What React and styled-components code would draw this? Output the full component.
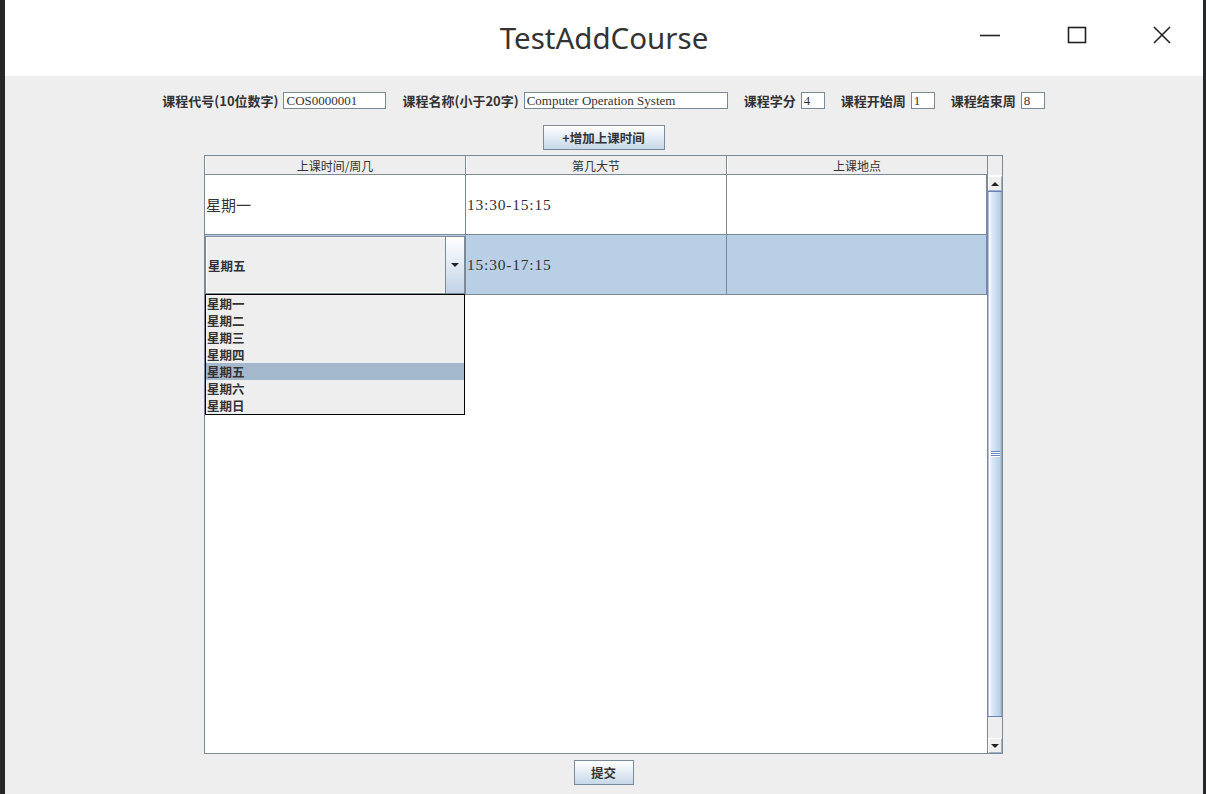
import React from "react";
import styled, { createGlobalStyle } from "styled-components";

const GlobalStyle = createGlobalStyle`
  html, body {
    margin: 0;
    padding: 0;
    background: #262729;
  }
  * {
    box-sizing: border-box;
  }
`;

const fields = [
  { label: "课程代号(10位数字)", value: "COS0000001", width: 103 },
  { label: "课程名称(小于20字)", value: "Computer Operation System", width: 204 },
  { label: "课程学分", value: "4", width: 24 },
  { label: "课程开始周", value: "1", width: 24 },
  { label: "课程结束周", value: "8", width: 24 },
];

const columns = ["上课时间/周几", "第几大节", "上课地点"];
const days = ["星期一", "星期二", "星期三", "星期四", "星期五", "星期六", "星期日"];

function App() {
  return (
    <>
      <GlobalStyle />
      <Window>
        <TitleBar>
          <span />
          <Title>TestAddCourse</Title>
          <Controls>
            <ControlButton>
              <svg width="22" height="22" viewBox="0 0 22 22">
                <path d="M1 11.5h20" stroke="#222" strokeWidth="1.6" />
              </svg>
            </ControlButton>
            <ControlButton>
              <svg width="22" height="22" viewBox="0 0 22 22">
                <rect x="2.5" y="3.5" width="17" height="15" fill="none" stroke="#222" strokeWidth="1.6" />
              </svg>
            </ControlButton>
            <ControlButton>
              <svg width="22" height="22" viewBox="0 0 22 22">
                <path d="M3 3l16 16M19 3L3 19" stroke="#222" strokeWidth="1.6" />
              </svg>
            </ControlButton>
          </Controls>
        </TitleBar>

        <Content>
          <FormRow>
            {fields.map((f) => (
              <Field key={f.label}>
                <Label>{f.label}</Label>
                <TextInput $width={f.width} defaultValue={f.value} />
              </Field>
            ))}
          </FormRow>

          <MetalButton $width={122} $gap={16}>+增加上课时间</MetalButton>

          <TableFrame>
            <TableMain>
              <HeaderRow>
                {columns.map((c) => (
                  <HeaderCell key={c}>{c}</HeaderCell>
                ))}
              </HeaderRow>
              <Body>
                <Row>
                  <Cell>
                    <CjkText>星期一</CjkText>
                  </Cell>
                  <Cell>
                    <TimeText>13:30-15:15</TimeText>
                  </Cell>
                  <Cell />
                </Row>
                <Row $selected>
                  <ComboCell>
                    <Combo>
                      <ComboValue>星期五</ComboValue>
                      <ComboArrow>
                        <Triangle $down />
                      </ComboArrow>
                    </Combo>
                    <Popup>
                      {days.map((d) => (
                        <PopupItem key={d} $active={d === "星期五"}>
                          {d}
                        </PopupItem>
                      ))}
                    </Popup>
                  </ComboCell>
                  <Cell>
                    <TimeText>15:30-17:15</TimeText>
                  </Cell>
                  <Cell />
                </Row>
              </Body>
            </TableMain>

            <ScrollColumn>
              <ScrollCorner />
              <ScrollBar>
                <ScrollArrow>
                  <Triangle />
                </ScrollArrow>
                <Thumb>
                  <Grip />
                </Thumb>
                <Track />
                <ScrollArrow>
                  <Triangle $down />
                </ScrollArrow>
              </ScrollBar>
            </ScrollColumn>
          </TableFrame>

          <MetalButton $width={60} $gap={6}>提交</MetalButton>
        </Content>
      </Window>
    </>
  );
}

export default App;

const Window = styled.div`
  margin: 0 3px 0 5px;
  height: 794px;
  display: flex;
  flex-direction: column;
  background: #eeeeee;
  overflow: hidden;
`;

const TitleBar = styled.div`
  height: 76px;
  background: #ffffff;
  display: grid;
  grid-template-columns: 1fr auto 1fr;
  align-items: center;
`;

const Title = styled.div`
  font-family: "Noto Sans", "Open Sans", sans-serif;
  font-size: 29.5px;
  color: #333333;
  padding-bottom: 2px;
`;

const Controls = styled.div`
  display: flex;
  justify-content: flex-end;
  gap: 2px;
`;

const ControlButton = styled.div`
  width: 85px;
  height: 76px;
  display: flex;
  align-items: center;
  justify-content: center;
  padding-bottom: 6px;
  &:last-child {
    width: 82px;
  }
`;

const Content = styled.div`
  flex: 1;
  display: flex;
  flex-direction: column;
  align-items: center;
  padding-top: 16px;
  padding-right: 1px;
`;

const FormRow = styled.div`
  display: flex;
  align-items: center;
  gap: 16px;
  height: 17px;
`;

const Field = styled.div`
  display: flex;
  align-items: center;
  gap: 5px;
`;

const Label = styled.span`
  font-family: "Noto Sans CJK SC", "DejaVu Sans", sans-serif;
  font-weight: 700;
  font-size: 13px;
  color: #333333;
  white-space: nowrap;
`;

const TextInput = styled.input`
  width: ${(p) => p.$width}px;
  height: 17px;
  border: 1px solid #7a8a99;
  background: #ffffff;
  padding: 0 2px;
  font-family: "Liberation Serif", "Noto Sans CJK SC", serif;
  font-size: 13px;
  color: #333333;
  outline: none;
`;

const MetalButton = styled.div`
  width: ${(p) => p.$width}px;
  height: 25px;
  margin-top: ${(p) => p.$gap}px;
  border: 1px solid #7a8a99;
  background: linear-gradient(180deg, #ffffff 0%, #e6eef6 45%, #c6d7e8 100%);
  display: flex;
  align-items: center;
  justify-content: center;
  font-family: "Noto Sans CJK SC", "DejaVu Sans", sans-serif;
  font-weight: 700;
  font-size: 12.5px;
  color: #333333;
`;

const TableFrame = styled.div`
  margin-top: 5px;
  width: 799px;
  height: 599px;
  border: 1px solid #7a8a99;
  display: flex;
  background: #ffffff;
`;

const TableMain = styled.div`
  flex: 1;
  display: flex;
  flex-direction: column;
`;

const HeaderRow = styled.div`
  height: 19px;
  display: grid;
  grid-template-columns: 261px 261px 260px;
  background: #eeeeee;
  border-bottom: 1px solid #7a8a99;
`;

const HeaderCell = styled.div`
  display: flex;
  align-items: center;
  justify-content: center;
  font-family: "Noto Sans CJK SC", "DejaVu Sans", sans-serif;
  font-size: 12px;
  color: #333333;
  border-right: 1px solid #7a8a99;
  box-shadow: inset 1px 0 0 #ffffff;
  &:last-child {
    border-right: none;
  }
`;

const Body = styled.div`
  flex: 1;
  background: #ffffff;
  position: relative;
`;

const Row = styled.div`
  height: 60px;
  display: grid;
  grid-template-columns: 261px 261px 260px;
  background: ${(p) => (p.$selected ? "#b8cfe5" : "#ffffff")};
  border-bottom: 1px solid #7a8a99;
`;

const Cell = styled.div`
  display: flex;
  align-items: center;
  padding-left: 1px;
  border-right: 1px solid #7a8a99;
`;

const ComboCell = styled(Cell)`
  position: relative;
  padding: 1px 0 0 0;
  align-items: stretch;
`;

const CjkText = styled.span`
  font-family: "Noto Sans CJK SC", "DejaVu Sans", sans-serif;
  font-size: 15px;
  color: #333333;
`;

const TimeText = styled.span`
  font-family: "Liberation Serif", serif;
  font-size: 15.5px;
  letter-spacing: 0.8px;
  color: #333333;
`;

const Combo = styled.div`
  flex: 1;
  display: flex;
  border: 1px solid #7a8a99;
  background: #eeeeee;
`;

const ComboValue = styled.div`
  flex: 1;
  display: flex;
  align-items: center;
  padding-left: 1px;
  font-family: "Noto Sans CJK SC", "DejaVu Sans", sans-serif;
  font-weight: 700;
  font-size: 12.5px;
  color: #333333;
  border: 1px solid #ffffff;
  border-right: none;
`;

const ComboArrow = styled.div`
  width: 19px;
  display: flex;
  align-items: center;
  justify-content: center;
  border-left: 1px solid #7a8a99;
  background: linear-gradient(180deg, #ffffff 0%, #e1eaf3 50%, #c0d3e6 100%);
`;

const Triangle = styled.span`
  width: 0;
  height: 0;
  border-left: 4px solid transparent;
  border-right: 4px solid transparent;
  ${(p) =>
    p.$down
      ? "border-top: 4px solid #222222;"
      : "border-bottom: 4px solid #222222;"}
`;

const Popup = styled.div`
  position: absolute;
  top: 59px;
  left: 0;
  width: 260px;
  height: 121px;
  border: 1px solid #000000;
  background: #eeeeee;
  z-index: 2;
`;

const PopupItem = styled.div`
  height: 17px;
  display: flex;
  align-items: center;
  padding-left: 1px;
  font-family: "Noto Sans CJK SC", "DejaVu Sans", sans-serif;
  font-weight: 700;
  font-size: 12.5px;
  color: #333333;
  background: ${(p) => (p.$active ? "#a3b8cc" : "transparent")};
`;

const ScrollColumn = styled.div`
  width: 16px;
  display: flex;
  flex-direction: column;
  border-left: 1px solid #7a8a99;
`;

const ScrollCorner = styled.div`
  height: 20px;
  background: #eeeeee;
  border-bottom: 1px solid #ffffff;
`;

const ScrollBar = styled.div`
  flex: 1;
  display: flex;
  flex-direction: column;
  background: #eeeeee;
`;

const ScrollArrow = styled.div`
  height: 15px;
  display: flex;
  align-items: center;
  justify-content: center;
  background: #eeeeee;
  border: 1px solid #ffffff;
  border-bottom-color: #9fb0c2;
  border-right-color: #9fb0c2;
`;

const Thumb = styled.div`
  height: 526px;
  background: linear-gradient(90deg, #6382bf 0px, #ffffff 1px, #dde8f3 4px, #b8cfe5 12px, #7a8a99 15px);
  border-top: 1px solid #6382bf;
  border-bottom: 1px solid #6382bf;
  display: flex;
  align-items: center;
  justify-content: center;
`;

const Grip = styled.div`
  width: 9px;
  height: 6px;
  background: repeating-linear-gradient(180deg, #6382bf 0px, #6382bf 1px, #ffffff 1px, #ffffff 2px);
`;

const Track = styled.div`
  flex: 1;
  background: #eeeeee;
`;
